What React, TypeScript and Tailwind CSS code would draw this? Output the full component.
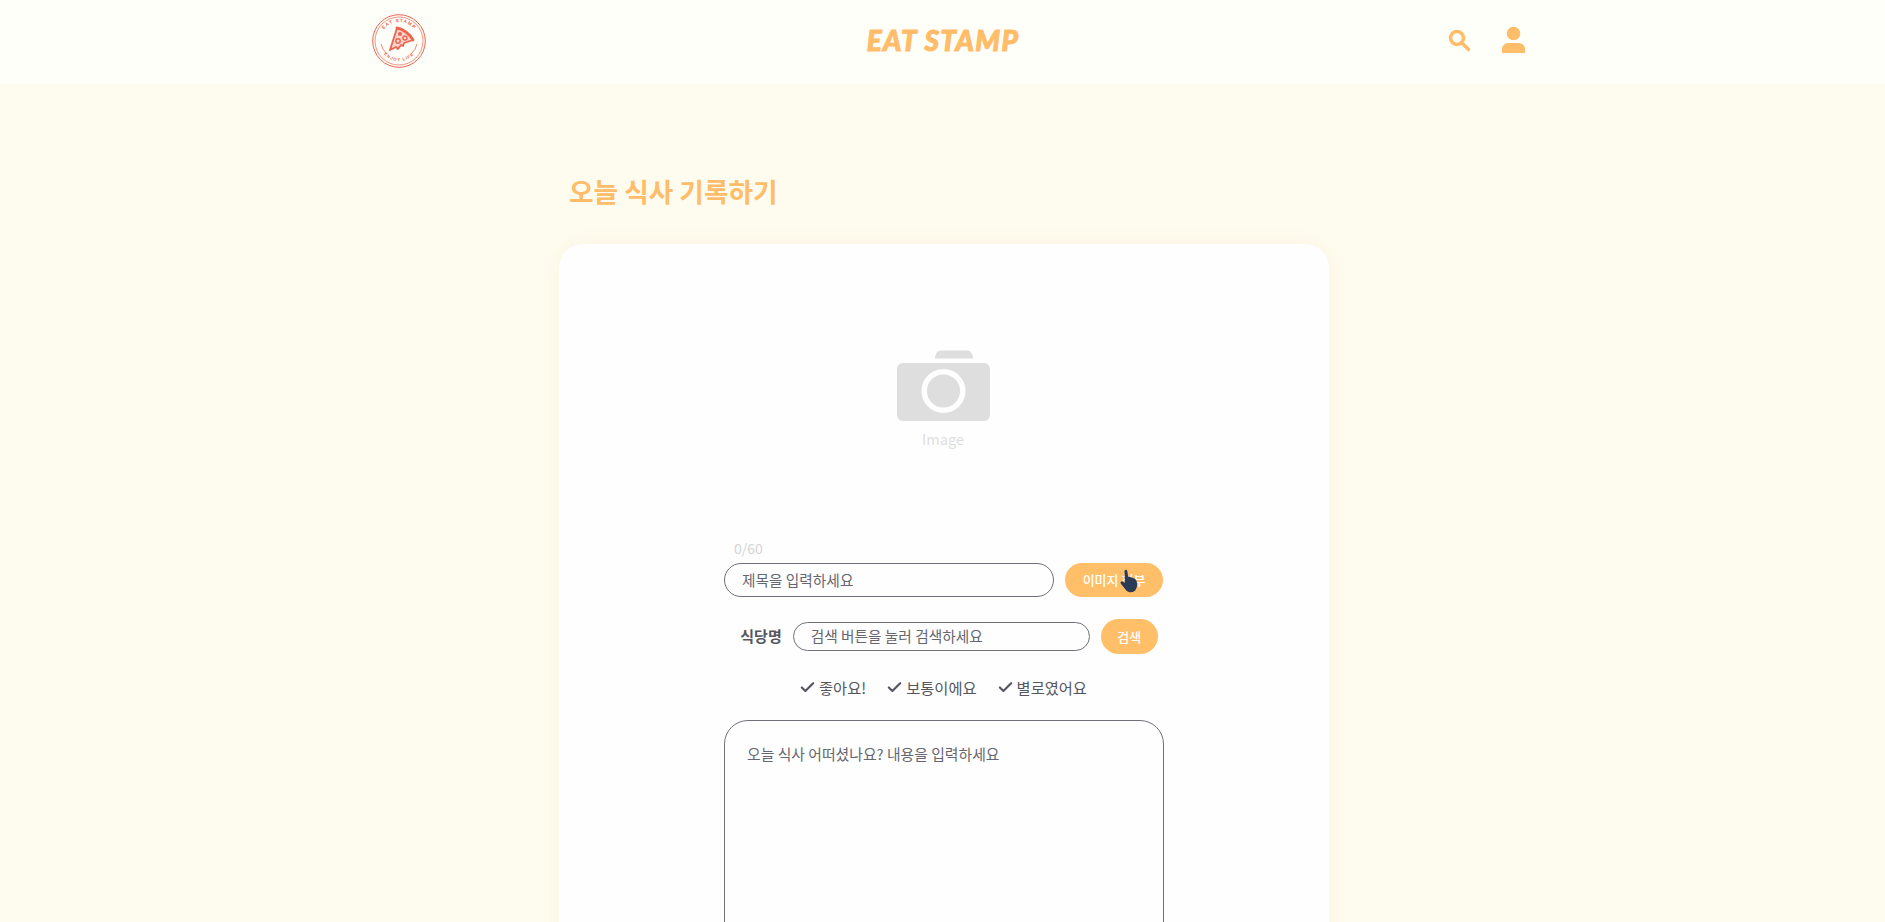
import { Check } from 'lucide-react';

const KR = "font-['Noto_Sans_CJK_KR','Noto_Sans',sans-serif]";

const Logo = () => (
  <svg width="54" height="54" viewBox="0 0 54 54" fill="none">
    <defs>
      <path id="arcTop" d="M8 27a19 19 0 0 1 38 0" />
      <path id="arcBottom" d="M7 27a20 20 0 0 0 40 0" />
    </defs>
    <circle cx="27" cy="27" r="26.300" stroke="#ea6450" strokeWidth="1" />
    <circle cx="27" cy="27" r="24" stroke="#ea6450" strokeWidth="0.7" />
    <text fontSize="4.600" fontWeight="700" fill="#ea6450" letterSpacing="1" fontFamily="Liberation Sans, sans-serif">
      <textPath href="#arcTop" startOffset="50%" textAnchor="middle">EAT STAMP</textPath>
    </text>
    <text fontSize="4.200" fontWeight="700" fill="#ea6450" letterSpacing="1" fontFamily="Liberation Sans, sans-serif">
      <textPath href="#arcBottom" startOffset="50%" textAnchor="middle">ENJOY LIFE</textPath>
    </text>
    <path d="M9 30a18 18 0 0 0 6 10M45 30a18 18 0 0 1-6 10" stroke="#ea6450" strokeWidth="0.8" />
    <path d="M18 36l7-22c6 1 13 6 16 12l-9 3-1 3-2-1-3 4-2-2z" stroke="#ea6450" strokeWidth="1.800" strokeLinejoin="round" fill="#fbd5cb" />
    <path d="M25 14c6 1 13 6 16 12" stroke="#ea6450" strokeWidth="2.800" strokeLinecap="round" />
    <circle cx="28" cy="20" r="2" fill="#ea6450" />
    <circle cx="33" cy="24" r="2" stroke="#ea6450" strokeWidth="1.400" />
    <circle cx="26" cy="27" r="2.200" stroke="#ea6450" strokeWidth="1.400" />
  </svg>
);

const SearchIcon = () => (
  <svg width="24" height="24" viewBox="0 0 24 24" fill="none" stroke="#ffbd69" strokeWidth="3.500">
    <circle cx="10" cy="10" r="6.500" />
    <path d="M15 15l6.500 6.500" strokeLinecap="round" />
  </svg>
);

const UserIcon = () => (
  <svg width="23" height="26" viewBox="0 0 23 26" fill="#ffbd69">
    <circle cx="11.500" cy="6.500" r="6.800" />
    <path d="M0 26v-4c0-3.500 3-6 6.500-6h10c3.500 0 6.500 2.500 6.500 6v4z" />
  </svg>
);

const CameraIcon = () => (
  <svg width="93" height="71" viewBox="0 0 93 71" fill="#dedede">
    <path d="M38 8.500c0-5 2.500-8 6-8h26c3.500 0 6 3 6 8z" />
    <rect x="0" y="13" width="93" height="58" rx="6" />
    <circle cx="46.500" cy="41" r="19.300" fill="none" stroke="#fefefe" strokeWidth="5.500" />
  </svg>
);

const Cursor = () => (
  <svg className="absolute left-[55px] top-[6px]" width="18" height="24" viewBox="0 0 20 26" fill="#2b3a55">
    <path d="M5 1.500c1-1.500 3-1 3.200 1L9 8l5 1.500c3 1 4.500 2.500 5 6 .3 4-1 8-4 9.500-3 1-6 .5-8-1.500L1 16c-1-1.500 0-3 2-2.500l2.500 1.500z" />
  </svg>
);

const Choice = ({ label }: { label: string }) => (
  <div className="flex items-center gap-[3px]">
    <Check size={17} strokeWidth={3} className="text-[#555560]" />
    <span className="text-[15.300px] text-[#555560]">{label}</span>
  </div>
);

export default function App() {
  return (
    <div className={`h-screen overflow-hidden bg-[#fefcef] ${KR}`}>
      <header className="grid h-[84px] grid-cols-[1fr_auto_1fr] items-center bg-[#fffffa] pl-[372px] pr-[360px]">
        <div className="mb-[3px]">
          <Logo />
        </div>
        <span className="mr-[11px] mb-[5px] font-['Lato',sans-serif] text-[28px] font-black tracking-[1.300px] text-[#ffbd69] italic [-webkit-text-stroke:1px_#ffbd69]">
          EAT STAMP
        </span>
        <div className="mb-[5px] flex items-center justify-end gap-[31px]">
          <SearchIcon />
          <UserIcon />
        </div>
      </header>

      <main className="ml-[559px] w-[770px] pt-[88px]">
        <h1 className="ml-[10px] text-[26.700px] leading-[38px] font-bold text-[#ffbd69]">오늘 식사 기록하기</h1>
        <section className="mt-[34px] flex h-[800px] flex-col items-center rounded-[24px] bg-[#fefefe] shadow-[0_0_20px_rgba(240,225,190,0.25)]">
          <div className="mt-[106px] ml-[-2px] flex flex-col items-center">
            <CameraIcon />
            <span className="mt-[8px] text-[14.500px] leading-[20px] text-[#dedede]">Image</span>
          </div>

          <div className="mt-[89px] flex w-[440px] flex-col">
            <span className="ml-[10px] text-[14px] leading-[20px] text-[#d4d4d4]">0/60</span>
            <div className="mt-[5px] flex items-center gap-[11px]">
              <div className="flex h-[34px] w-[330px] items-center rounded-full border border-[#70707a] pl-[17px] text-[14.700px] text-[#666670]">
                제목을 입력하세요
              </div>
              <div className="relative flex h-[34px] w-[98px] items-center justify-center rounded-full bg-[#ffbf69] text-[13px] font-medium text-white">
                이미지 첨부
                <Cursor />
              </div>
            </div>

            <div className="mt-[22px] flex items-center justify-center gap-[11px] pl-[10px]">
              <span className="text-[15px] font-bold text-[#555560]">식당명</span>
              <div className="flex h-[29px] w-[297px] items-center rounded-full border border-[#70707a] pl-[17px] text-[14.700px] text-[#666670]">
                검색 버튼을 눌러 검색하세요
              </div>
              <div className="flex h-[35px] w-[57px] items-center justify-center rounded-full bg-[#ffbf69] text-[13px] font-medium text-white">
                검색
              </div>
            </div>

            <div className="mt-[22px] flex items-center justify-center gap-[20px] pr-[2px]">
              <Choice label="좋아요!" />
              <Choice label="보통이에요" />
              <Choice label="별로였어요" />
            </div>

            <div className="mt-[21px] h-[240px] rounded-[24px] border border-[#70707a] px-[22px] pt-[23px] text-[14.850px] leading-[20px] text-[#666670]">
              오늘 식사 어떠셨나요? 내용을 입력하세요
            </div>
          </div>
        </section>
      </main>
    </div>
  );
}
